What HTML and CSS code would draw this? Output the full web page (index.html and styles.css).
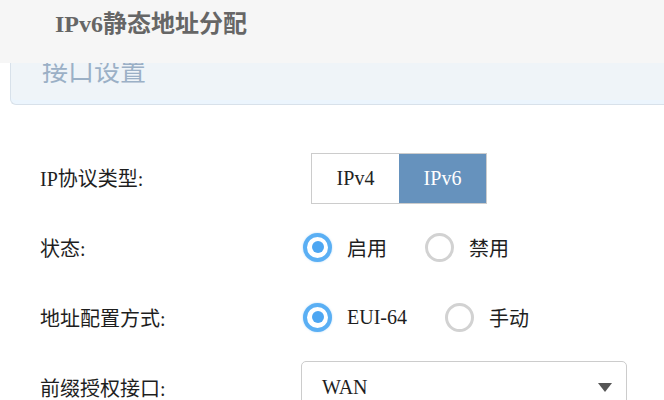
FILE: index.html
```html
<!DOCTYPE html>
<html>
<head>
    <title>IPv6静态地址分配</title>
    <link rel="stylesheet" href="styles.css">
</head>
<body>
    <div class="page-header">
        <h1>IPv6静态地址分配</h1>
    </div>

    <div class="panel">
        <h2>接口设置</h2>
    </div>

    <div class="form">
        <div class="form-row">
            <label>IP协议类型:</label>
            <div class="segmented">
                <span class="seg">IPv4</span>
                <span class="seg active">IPv6</span>
            </div>
        </div>

        <div class="form-row">
            <label>状态:</label>
            <div class="radio-group">
                <span class="radio checked"></span><span class="radio-text">启用</span>
                <span class="radio"></span><span class="radio-text">禁用</span>
            </div>
        </div>

        <div class="form-row">
            <label>地址配置方式:</label>
            <div class="radio-group">
                <span class="radio checked"></span><span class="radio-text">EUI-64</span>
                <span class="radio"></span><span class="radio-text">手动</span>
            </div>
        </div>

        <div class="form-row">
            <label>前缀授权接口:</label>
            <div class="select">
                <span>WAN</span>
                <span class="caret"></span>
            </div>
        </div>
    </div>
</body>
</html>
```

FILE: styles.css
```css
body {
    margin: 0;
    font-family: "Liberation Serif", "Noto Sans CJK SC", serif;
    color: #1e1e1e;
    background: #fff;
    overflow: hidden;
}
.page-header {
    height: 63px;
    background: #f6f6f6;
    padding-left: 55px;
    box-sizing: border-box;
}
.page-header h1 {
    margin: 0;
    padding-top: 8px;
    font-size: 24px;
    line-height: 32px;
    font-weight: bold;
    color: #666;
}
.panel {
    margin-left: 10px;
    height: 41px;
    background: #eff4f8;
    border-left: 1px solid #d8e1ea;
    border-bottom: 1px solid #d8e1ea;
    border-bottom-left-radius: 6px;
    box-shadow: inset 0 -4px 0 #ecf5fd;
    overflow: hidden;
    padding-left: 31px;
}
.panel h2 {
    margin: -8px 0 0;
    font-size: 26px;
    line-height: 30px;
    font-weight: normal;
    color: #9bb0c6;
    font-family: "Noto Sans CJK SC", sans-serif;
}
.form {
    padding: 37px 0 0 40px;
}
.form-row {
    display: flex;
    align-items: center;
    height: 70px;
}
.form-row label {
    width: 261px;
    flex-shrink: 0;
    font-size: 20px;
}
.segmented {
    display: flex;
    margin-left: 10px;
    margin-top: 2px;
    border: 1px solid #ccc;
}
.seg {
    width: 87px;
    height: 49px;
    line-height: 49px;
    text-align: center;
    font-size: 20px;
    background: #fff;
    color: #222;
}
.seg.active {
    background: #6692bd;
    color: #fff;
}
.radio-group {
    display: flex;
    align-items: center;
    margin-left: 2px;
}
.radio {
    width: 29px;
    height: 29px;
    box-sizing: border-box;
    border-radius: 50%;
    border: 3px solid #d2d2d2;
    background: #fff;
    position: relative;
    flex-shrink: 0;
}
.radio.checked {
    border: 4px solid #5aaff4;
    box-shadow: 0 0 2px rgba(90, 175, 244, 0.5);
}
.radio.checked::after {
    content: "";
    position: absolute;
    left: 4.5px;
    top: 4.5px;
    width: 12px;
    height: 12px;
    border-radius: 50%;
    background: #4da6f2;
}
.radio-text {
    font-size: 20px;
    margin-left: 15px;
    margin-right: 38px;
}
.select {
    display: flex;
    align-items: center;
    justify-content: space-between;
    width: 326px;
    height: 52px;
    box-sizing: border-box;
    border: 1px solid #ccc;
    border-radius: 5px;
    padding: 0 14px 0 20px;
    font-size: 20px;
}
.caret {
    width: 0;
    height: 0;
    border-left: 7px solid transparent;
    border-right: 7px solid transparent;
    border-top: 9px solid #555;
}
```
